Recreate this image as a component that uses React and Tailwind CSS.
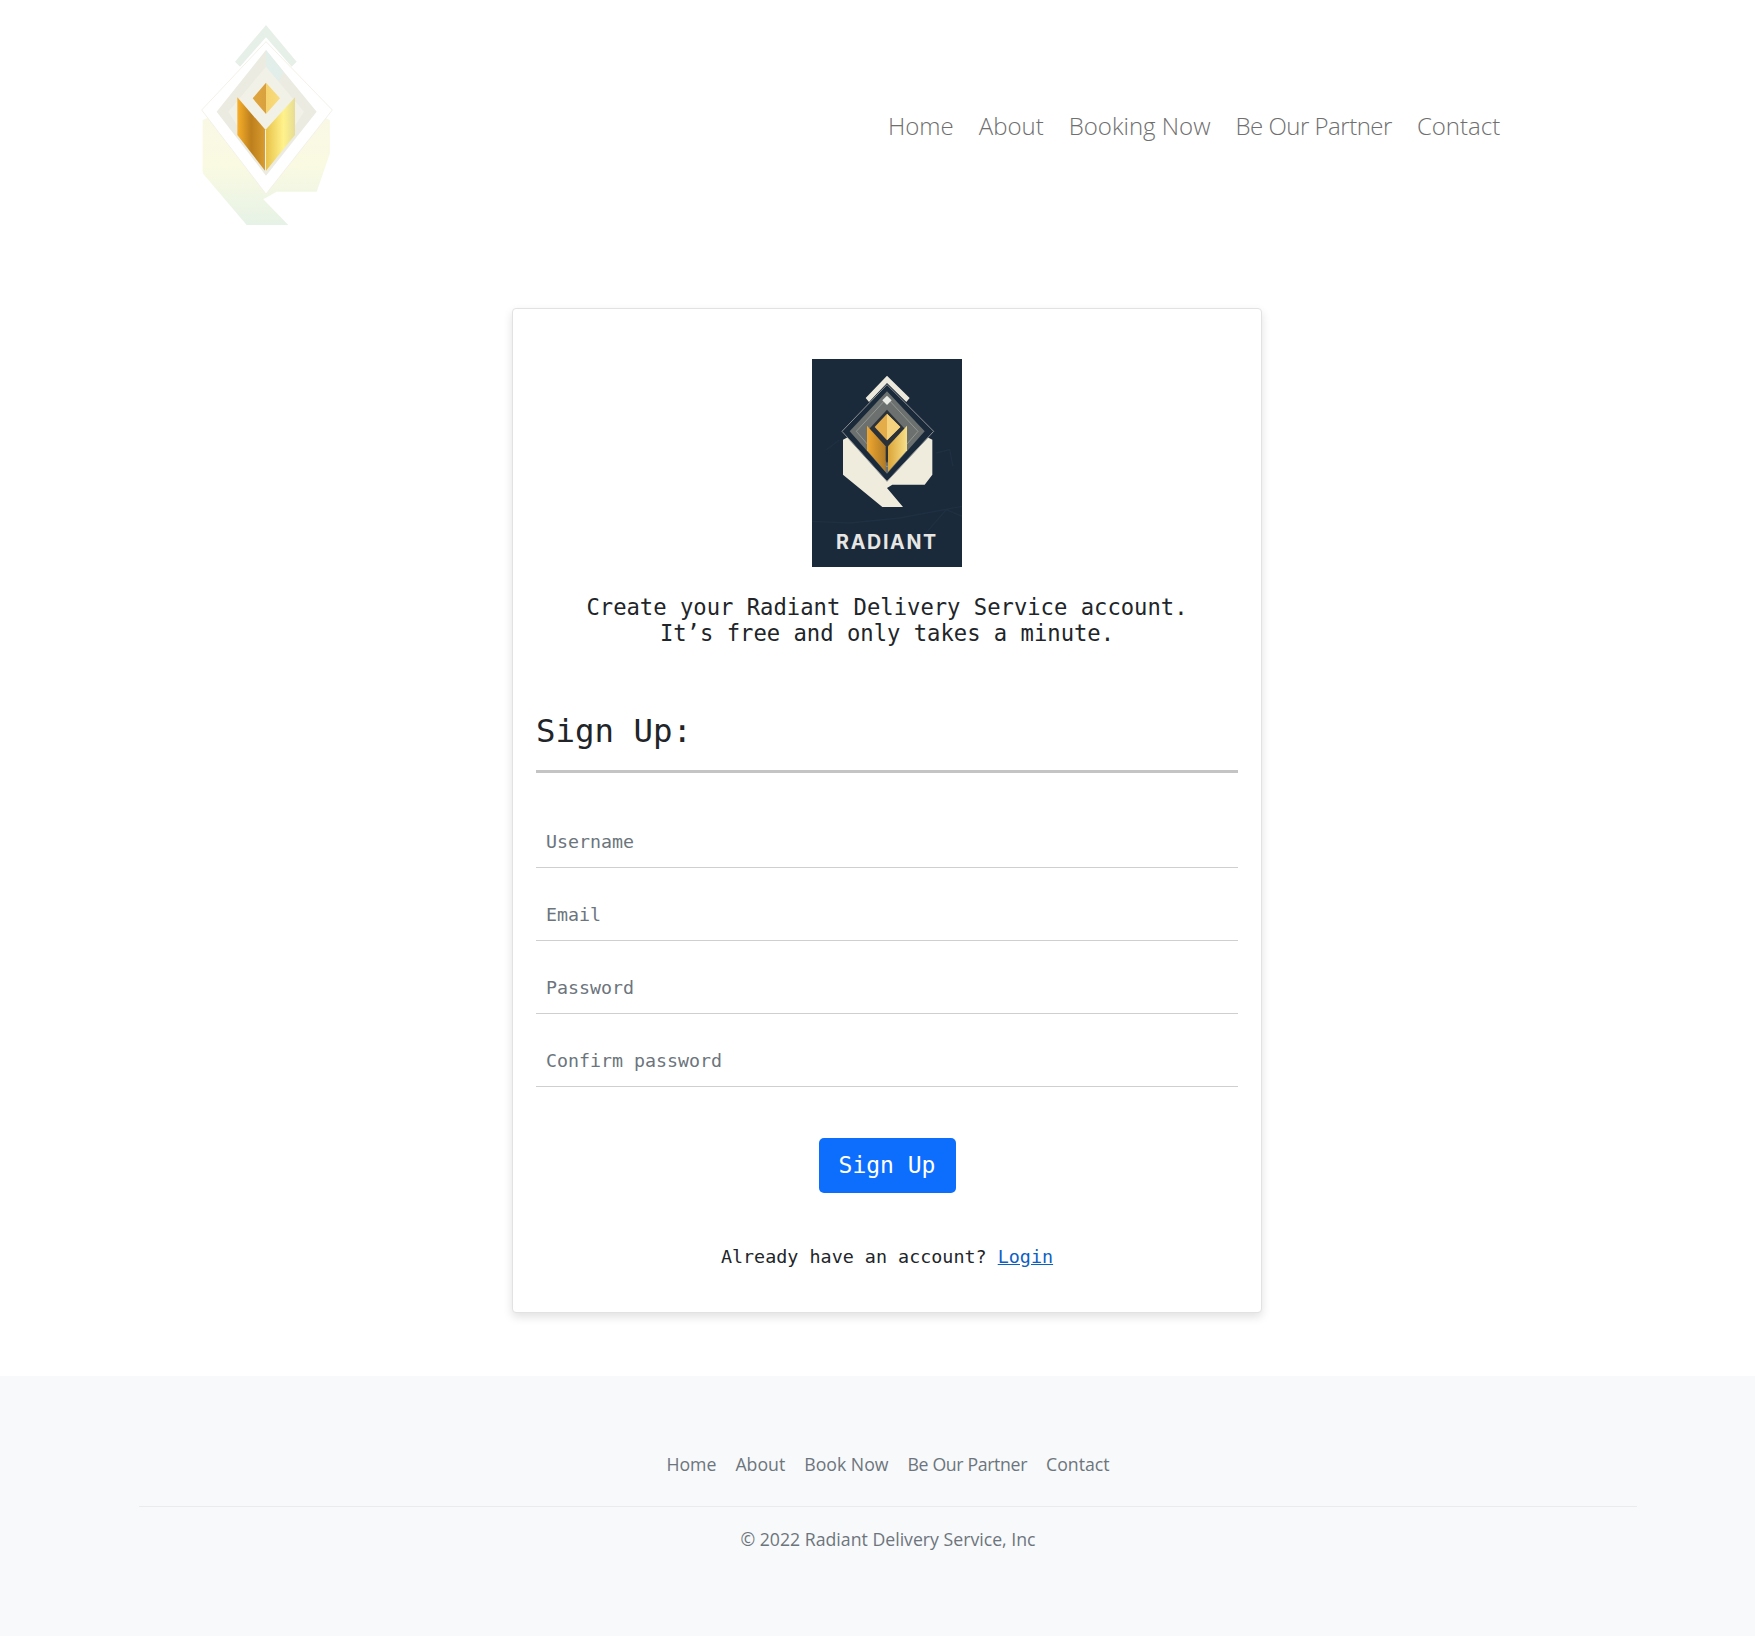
import React from 'react'

const navLinks = ['Home', 'About', 'Booking Now', 'Be Our Partner', 'Contact']
const footerLinks = ['Home', 'About', 'Book Now', 'Be Our Partner', 'Contact']
const fields = ['Username', 'Email', 'Password', 'Confirm password']

function HeaderLogo() {
  return (
    <svg width="180" height="230" viewBox="0 0 540 690">
      <defs>
        <linearGradient id="bodyFade" x1="0" y1="0" x2="0" y2="1">
          <stop offset="0" stopColor="#f8f7e8" />
          <stop offset="0.55" stopColor="#fafae2" />
          <stop offset="1" stopColor="#e6f2e6" />
        </linearGradient>
        <linearGradient id="goldLeft" x1="0" y1="0" x2="1" y2="0">
          <stop offset="0" stopColor="#f7b02a" />
          <stop offset="0.5" stopColor="#bd7f1c" />
          <stop offset="1" stopColor="#d89c30" />
        </linearGradient>
        <linearGradient id="goldRight" x1="0" y1="0" x2="1" y2="0">
          <stop offset="0" stopColor="#e9c24a" />
          <stop offset="0.6" stopColor="#fff28a" />
          <stop offset="1" stopColor="#e6dc96" />
        </linearGradient>
        <linearGradient id="goldTop" x1="0" y1="0" x2="1" y2="0">
          <stop offset="0" stopColor="#e0a63c" />
          <stop offset="0.5" stopColor="#d8a040" />
          <stop offset="0.5" stopColor="#f5d36e" />
          <stop offset="1" stopColor="#f8dc80" />
        </linearGradient>
      </defs>
      <polygon points="258,45 350,155 335,170 258,82 180,170 165,155" fill="#e6f0e8" />
      <polygon points="68,330 68,490 200,645 325,645 250,568 290,545 410,545 450,430 450,330 258,250" fill="url(#bodyFade)" />
      <polygon points="258,95 457,300 258,552 65,300" fill="#ffffff" stroke="#f5f1e8" strokeWidth="3" />
      <polygon points="258,120 410,305 258,497 110,305" fill="#ebebe2" />
      <polygon points="258,120 310,185 258,300" fill="#e2eeea" />
      <polygon points="258,170 372,305 258,480 145,305" fill="#f2f1e8" />
      <polygon points="172,262 255,358 255,482 172,375" fill="url(#goldLeft)" />
      <polygon points="345,262 258,358 258,482 345,375" fill="url(#goldRight)" />
      <polygon points="258,218 300,265 258,312 218,265" fill="url(#goldTop)" />
    </svg>
  )
}

function RadiantCard() {
  return (
    <svg width="150" height="208" viewBox="67 28 450 624" className="block">
      <defs>
        <linearGradient id="cardLeft" x1="0" y1="0" x2="1" y2="0">
          <stop offset="0" stopColor="#f0a830" />
          <stop offset="1" stopColor="#b07a26" />
        </linearGradient>
        <linearGradient id="cardRight" x1="0" y1="0" x2="1" y2="0">
          <stop offset="0" stopColor="#dca538" />
          <stop offset="1" stopColor="#f7e08a" />
        </linearGradient>
      </defs>
      <rect x="67" y="28" width="450" height="624" fill="#1a2a3b" />
      {/* faint map texture behind the badge */}
      <path d="M67 515 L180 520 L330 505 L517 470 M400 560 L470 480 L517 500 M110 300 L150 270 M440 310 L480 300 L490 350" fill="none" stroke="#1f3042" strokeWidth="4" />
      <polygon points="292,78 360,145 350,157 292,100 238,157 228,145" fill="#ece8dc" />
      <polygon points="160,270 160,375 278,472 340,472 292,415 308,405 405,405 428,375 428,270 292,200" fill="#efebdd" />
      <polygon points="292,105 432,245 292,395 157,245" fill="#1a2a3b" stroke="#8c9090" strokeWidth="3" />
      <polygon points="292,125 405,245 292,372 180,245" fill="#6c716f" />
      <polygon points="292,145 385,245 292,352 200,245" fill="none" stroke="#a5a8a3" strokeWidth="2" />
      <polygon points="292,180 352,245 292,340 232,245" fill="#2b3138" />
      <polygon points="232,228 288,290 288,366 232,302" fill="url(#cardLeft)" />
      <polygon points="352,228 295,290 295,366 352,302" fill="url(#cardRight)" />
      <polygon points="292,192 332,232 292,272 255,232" fill="#e5ad4a" />
      <polygon points="292,192 332,232 292,272" fill="#f5d27e" />
      <polygon points="292,138 306,152 292,166 278,152" fill="#e8ebe6" />
      <text x="292" y="598" textAnchor="middle" fontFamily="Inter, sans-serif" fontWeight="700" fontSize="59" letterSpacing="5" fill="#e6e6e4">RADIANT</text>
    </svg>
  )
}

export default function App() {
  return (
    <div className="min-h-[1645px] bg-white font-['Open_Sans',sans-serif]">
      {/* Header */}
      <header className="flex h-[260px] pl-[180px] pt-[10px]">
        <HeaderLogo />
        <nav className="ml-[528px] mt-[88px] flex h-[54px] items-center gap-[25px] pt-[2px] text-[24px] font-light text-[#6f6f6f]">
          {navLinks.map((link) => (
            <a key={link} href="#" className={link === 'Be Our Partner' ? 'tracking-[-0.5px]' : ''}>{link}</a>
          ))}
        </nav>
      </header>

      {/* Sign up card */}
      <main className="mt-[48px] flex justify-center pl-[19px]">
        <div className="h-[1005px] w-[750px] rounded-[4px] border border-[#e2e2e2] bg-white px-[23px] pt-[50px] shadow-[0_4px_10px_rgba(0,0,0,0.12)] font-['DejaVu_Sans_Mono',monospace] text-[#212529]">
          <div className="flex justify-center">
            <RadiantCard />
          </div>
          <p className="mt-[28px] text-center text-[22.2px] leading-[25.6px]">
            Create your Radiant Delivery Service account.<br />
            It’s free and only takes a minute.
          </p>
          <h2 className="mt-[63px] pb-[17px] text-[32.4px] leading-[44px] border-b-[3px] border-[#c4c4c4]">Sign Up:</h2>
          <form className="mt-[46px]">
            {fields.map((field) => (
              <div key={field} className="mb-[24px] h-[49px] border-b border-[#cfcfcf] pl-[10px] pt-[9px] text-[18.3px] leading-[28px] text-[#6c757d]">
                {field}
              </div>
            ))}
            <div className="mt-[51px] flex justify-center">
              <button type="button" className="h-[55px] w-[137px] rounded-[5px] bg-[#0d6efd] text-[23px] text-white">Sign Up</button>
            </div>
          </form>
          <p className="mt-[50px] text-center text-[18.4px] leading-[28px]">
            Already have an account? <a href="#" className="text-[#0d5fc4] underline">Login</a>
          </p>
        </div>
      </main>

      {/* Footer */}
      <footer className="mt-[63px] h-[260px] bg-[#f8f9fa] pl-[139px] pr-[118px] pt-[74px] text-[#6c757d]">
        <div className="flex justify-center gap-[19px] border-b border-[#e9ecef] pb-[28px] text-[17.7px] leading-[28px]">
          {footerLinks.map((link) => (
            <a key={link} href="#" className={link === 'Be Our Partner' ? 'tracking-[-0.35px]' : ''}>{link}</a>
          ))}
        </div>
        <p className="mt-[18px] text-center text-[17.7px] leading-[28px]">© 2022 Radiant Delivery Service, Inc</p>
      </footer>
    </div>
  )
}
